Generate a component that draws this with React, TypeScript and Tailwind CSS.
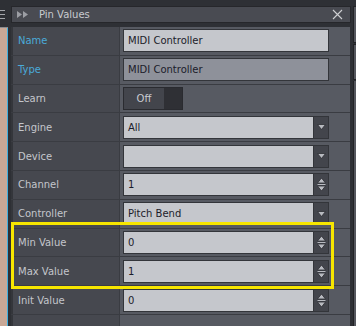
import React from 'react';

type Row = {
  label: string;
  kind: 'text' | 'readonly' | 'toggle' | 'select' | 'spin' | 'none';
  value?: string;
  accent?: boolean;
};

const rows: Row[] = [
  { label: 'Name', kind: 'text', value: 'MIDI Controller', accent: true },
  { label: 'Type', kind: 'readonly', value: 'MIDI Controller', accent: true },
  { label: 'Learn', kind: 'toggle', value: 'Off' },
  { label: 'Engine', kind: 'select', value: 'All' },
  { label: 'Device', kind: 'select', value: '' },
  { label: 'Channel', kind: 'spin', value: '1' },
  { label: 'Controller', kind: 'select', value: 'Pitch Bend' },
  { label: 'Min Value', kind: 'spin', value: '0' },
  { label: 'Max Value', kind: 'spin', value: '1' },
  { label: 'Init Value', kind: 'spin', value: '0' },
  { label: '', kind: 'none' },
];

const DownArrow = () => (
  <svg width="9" height="6" viewBox="0 0 9 6">
    <path d="M0.5 0.5 H8.5 L4.5 5.5 Z" fill="#b8bac0" stroke="#2c2d32" strokeWidth="0.8" />
  </svg>
);

const SpinArrows = () => (
  <svg width="9" height="15" viewBox="0 0 9 15">
    <path d="M0.5 6 H8.5 L4.5 1 Z" fill="#b8bac0" stroke="#2c2d32" strokeWidth="0.8" />
    <line x1="0.5" y1="7.5" x2="8.5" y2="7.5" stroke="#b8bac0" strokeWidth="1" />
    <path d="M0.5 9 H8.5 L4.5 14 Z" fill="#b8bac0" stroke="#2c2d32" strokeWidth="0.8" />
  </svg>
);

const Field: React.FC<{ row: Row }> = ({ row }) => {
  if (row.kind === 'none') return null;
  if (row.kind === 'toggle') {
    return (
      <div className="flex h-[23px] w-[60px] border border-[#2a2b30] bg-[#2f3035]">
        <div className="flex w-[40px] items-center justify-center bg-[#43454c] text-[#c9cbd0]">{row.value}</div>
      </div>
    );
  }
  const bg = row.kind === 'readonly' ? 'bg-[#8e919a]' : 'bg-[#c5c7cc]';
  return (
    <div className={`flex h-[23px] w-[206px] border border-[#33353a] ${bg}`}>
      <div className="flex flex-1 items-center pl-[4px] text-[#1c1c2a]">{row.value}</div>
      {row.kind === 'select' && (
        <div className="flex w-[15px] items-center justify-center border-l border-[#33353a] bg-[#43454c]">
          <DownArrow />
        </div>
      )}
      {row.kind === 'spin' && (
        <div className="flex w-[15px] items-center justify-center border-l border-[#33353a] bg-[#43454c]">
          <SpinArrows />
        </div>
      )}
    </div>
  );
};

export default function App() {
  return (
    <div className="relative flex h-[326px] w-[356px] overflow-hidden bg-[#2e3035] font-['DejaVu_Sans',sans-serif] text-[10px]">
      {/* left neighbour strip */}
      <div className="flex w-[8px] flex-col">
        <div className="flex h-[28px] flex-col gap-[3px] border-b border-[#8a8c90] pr-[2px] pt-[10px]">
          <div className="h-[1px] w-[5px] bg-[#a4a6ab]" />
          <div className="h-[1px] w-[5px] bg-[#a4a6ab]" />
          <div className="h-[1px] w-[5px] bg-[#a4a6ab]" />
        </div>
        <div className="flex-1 border-r border-[#3fb0e0] bg-[#c8a896]" />
      </div>

      {/* panel */}
      <div className="ml-[3px] flex w-[340px] flex-col pt-[6px]">
        <div className="flex h-[17px] items-center border border-[#26272b] bg-[#494b52] pl-[5px] pr-[7px]">
          <svg width="12" height="7" viewBox="0 0 12 7">
            <path d="M0 0 L5 3.5 L0 7 Z M6 0 L11 3.5 L6 7 Z" fill="#9c9ea4" />
          </svg>
          <span className="ml-[10px] text-[#c8cacf]">Pin Values</span>
          <svg className="ml-auto" width="11" height="11" viewBox="0 0 11 11">
            <path d="M1 1 L10 10 M10 1 L1 10" stroke="#cfd0d3" strokeWidth="1.1" />
          </svg>
        </div>

        <div className="mt-[4px] mr-[1px] flex flex-col">
          {rows.map((row, i) => (
            <div key={i} className="flex h-[28.8px] shrink-0 border-b border-[#3a3c42]">
              <div
                className={`flex w-[108px] items-center border-l-2 border-[#34363b] bg-[#46484f] pl-[5px] ${
                  row.accent ? 'text-[#4aaad9]' : 'text-[#c4c6cc]'
                }`}
              >
                {row.label}
              </div>
              <div className="flex flex-1 items-center border-l border-[#3a3c42] bg-[#575a62] pl-[3px]">
                <Field row={row} />
              </div>
            </div>
          ))}
        </div>
      </div>

      {/* right neighbour strip */}
      <div className="flex flex-1 flex-col">
        <div className="ml-[2px] mt-[6px] h-[37px] border-l border-y border-[#222326] bg-[#55575e]" />
        <div className="ml-[2px] mt-[1px] h-[36px] border-l border-y border-[#222326] bg-[#55575e]" />
        <div className="ml-[2px] mt-[1px] flex-1 border-l border-[#222326] bg-[#55575e]" />
      </div>

      {/* highlight annotation */}
      <div className="absolute left-[11px] top-[222px] h-[67px] w-[323px] border-[3px] border-[#f7e600]" />
    </div>
  );
}
